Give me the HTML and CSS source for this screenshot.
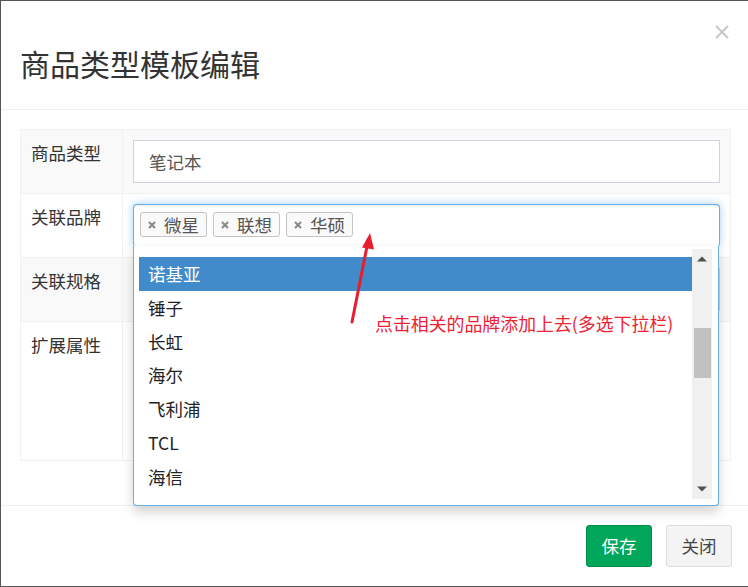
FILE: index.html
```html
<!DOCTYPE html>
<html lang="zh-CN">
<head>
<meta charset="utf-8">
<title>商品类型模板编辑</title>
<link rel="stylesheet" href="styles.css">
</head>
<body>
<div class="modal">
  <div class="modal-header">
    <h4 class="modal-title">商品类型模板编辑</h4>
    <span class="close" aria-label="关闭"><svg width="14" height="14" viewBox="0 0 14 14"><path d="M1 1L13 13M13 1L1 13" stroke="#c8c8c8" stroke-width="2.2" fill="none"/></svg></span>
  </div>
  <div class="modal-body">
    <table class="form-table">
      <tr class="striped">
        <td class="label">商品类型</td>
        <td class="field"><div class="input">笔记本</div></td>
      </tr>
      <tr>
        <td class="label">关联品牌</td>
        <td class="field">
          <div class="select2">
            <span class="tag"><svg class="tag-x" width="8" height="8" viewBox="0 0 8 8"><path d="M1 1L7 7M7 1L1 7" stroke="#888" stroke-width="2" fill="none"/></svg>微星</span>
            <span class="tag"><svg class="tag-x" width="8" height="8" viewBox="0 0 8 8"><path d="M1 1L7 7M7 1L1 7" stroke="#888" stroke-width="2" fill="none"/></svg>联想</span>
            <span class="tag"><svg class="tag-x" width="8" height="8" viewBox="0 0 8 8"><path d="M1 1L7 7M7 1L1 7" stroke="#888" stroke-width="2" fill="none"/></svg>华硕</span>
            <div class="dropdown">
              <div class="results">
                <ul class="opts">
                  <li class="opt active">诺基亚</li>
                  <li class="opt">锤子</li>
                  <li class="opt">长虹</li>
                  <li class="opt">海尔</li>
                  <li class="opt">飞利浦</li>
                  <li class="opt">TCL</li>
                  <li class="opt">海信</li>
                </ul>
                <div class="sb">
                  <div class="sb-btn"><svg width="10" height="6" viewBox="0 0 10 6"><path d="M0 5.5L5 0.5L10 5.5Z" fill="#505050"/></svg></div>
                  <div class="sb-thumb"></div>
                  <div class="sb-fill"></div>
                  <div class="sb-btn"><svg width="10" height="6" viewBox="0 0 10 6"><path d="M0 0.5L5 5.5L10 0.5Z" fill="#505050"/></svg></div>
                </div>
              </div>
            </div>
          </div>
        </td>
      </tr>
      <tr class="striped">
        <td class="label">关联规格</td>
        <td class="field"><div class="input"></div></td>
      </tr>
      <tr class="tall">
        <td class="label">扩展属性</td>
        <td class="field"></td>
      </tr>
    </table>
  </div>
  <div class="modal-footer">
    <button class="btn btn-success">保存</button>
    <button class="btn btn-default">关闭</button>
  </div>
  <svg class="annot-arrow" width="40" height="100" viewBox="340 228 40 100">
    <path d="M352 322L367.5 244" stroke="#e81c2c" stroke-width="3" fill="none" stroke-linecap="round"/>
    <path d="M370 233L362 247.5L374 249.5Z" fill="#e81c2c"/>
  </svg>
  <span class="annot-text">点击相关的品牌添加上去(多选下拉栏)</span>
</div>
</body>
</html>
```
FILE: styles.css
```css
html, body {
  margin: 0;
  padding: 0;
  background: #fff;
}

body {
  font-family: "Noto Sans CJK SC", "Noto Sans", sans-serif;
  font-size: 17.5px;
  color: #333;
}

.modal {
  position: relative;
  width: 748px;
  height: 587px;
  box-sizing: border-box;
  border-top: 1px solid #555;
  border-left: 1px solid #555;
  border-bottom: 1px solid #555;
  display: flex;
  flex-direction: column;
  background: #fff;
  overflow: hidden;
}

.modal-header {
  height: 109px;
  box-sizing: border-box;
  border-bottom: 1px solid #f1f1f1;
  padding: 24px 19px 0 19px;
  display: flex;
  justify-content: space-between;
  align-items: flex-start;
  flex: none;
}

.modal-title {
  margin: 18px 0 0 0;
  font-size: 30px;
  line-height: 40px;
  font-weight: normal;
  color: #333;
}

.close {
  display: block;
  width: 14px;
  height: 14px;
  margin-right: 0;
}

.close svg {
  display: block;
}

.modal-body {
  flex: 1;
  padding: 19px 17px 0 19px;
}

.form-table {
  width: 711px;
  border-collapse: collapse;
  border: 1px solid #f1f1f1;
}

.form-table td {
  border: 1px solid #f1f1f1;
  padding: 10px;
  vertical-align: top;
  line-height: 25px;
}

.form-table tr.striped td {
  background: #f9f9f9;
}

.form-table td.label {
  width: 81px;
  color: #333;
}

.form-table tr.tall td {
  height: 118px;
}

.input {
  height: 43px;
  box-sizing: border-box;
  border: 1px solid #d2d2de;
  background: #fff;
  padding: 0 15px;
  line-height: 41px;
  color: #555;
}

.select2 {
  position: relative;
  height: 43px;
  box-sizing: border-box;
  border: 1px solid #66afe9;
  border-bottom-color: transparent;
  border-radius: 4px;
  background: #fff;
  box-shadow: inset 0 1px 1px rgba(0, 0, 0, .075), 0 0 8px rgba(102, 175, 233, .6);
  padding: 7px 6px 0 6px;
  display: flex;
  align-items: flex-start;
  gap: 6px;
}

.tag {
  display: flex;
  align-items: center;
  height: 25px;
  box-sizing: border-box;
  border: 1px solid #c4c4c4;
  border-radius: 3px;
  background: #fafafa;
  padding: 0 7px 0 7px;
  line-height: 23px;
  color: #555;
}

.tag-x {
  display: block;
  margin-right: 8px;
}

.dropdown {
  position: absolute;
  z-index: 10;
  left: -1px;
  top: 100%;
  width: calc(100% + 1px);
  box-sizing: border-box;
  border: 1px solid #66afe9;
  border-top: none;
  border-radius: 0 0 4px 4px;
  background: #fff;
  box-shadow: 0 6px 12px rgba(0, 0, 0, .175);
  padding: 3px 6px 6px 5px;
}

.results {
  display: flex;
  height: 250px;
}

.opts {
  flex: 1;
  margin: 0;
  padding: 8px 0 0 0;
  list-style: none;
  overflow: hidden;
}

.opt {
  height: 33.75px;
  box-sizing: border-box;
  padding: 4px 9px;
  line-height: 25.75px;
  color: #222;
}

.opt.active {
  background: #428bca;
  color: #fff;
}

.sb {
  width: 20px;
  background: #f0f0f0;
  display: flex;
  flex-direction: column;
  align-items: center;
}

.sb-btn {
  height: 20px;
  width: 20px;
  display: flex;
  align-items: center;
  justify-content: center;
  flex: none;
}

.sb-btn svg {
  display: block;
}

.sb-thumb {
  width: 17px;
  height: 50px;
  margin-top: 59px;
  margin-left: 1px;
  background: #c1c1c1;
  flex: none;
}

.sb-fill {
  flex: 1;
}

.modal-footer {
  flex: none;
  border-top: 1px solid #f1f1f1;
  padding: 19px 16px 19px 0;
  display: flex;
  justify-content: flex-end;
  gap: 14px;
}

.btn {
  height: 42px;
  width: 66px;
  box-sizing: border-box;
  border-radius: 3px;
  font-family: "Noto Sans CJK SC", "Noto Sans", sans-serif;
  font-size: 17.5px;
  line-height: 40px;
  padding: 0;
  text-align: center;
  cursor: pointer;
}

.btn-success {
  background: #00a65a;
  border: 1px solid #008d4c;
  color: #fff;
}

.btn-default {
  background: #f4f4f4;
  border: 1px solid #ddd;
  color: #444;
}

.annot-arrow {
  position: absolute;
  left: 339px;
  top: 227px;
  z-index: 20;
}

.annot-text {
  position: absolute;
  left: 374px;
  top: 310px;
  z-index: 20;
  font-size: 17.9px;
  line-height: 25px;
  color: #ee2233;
  white-space: nowrap;
}
```
